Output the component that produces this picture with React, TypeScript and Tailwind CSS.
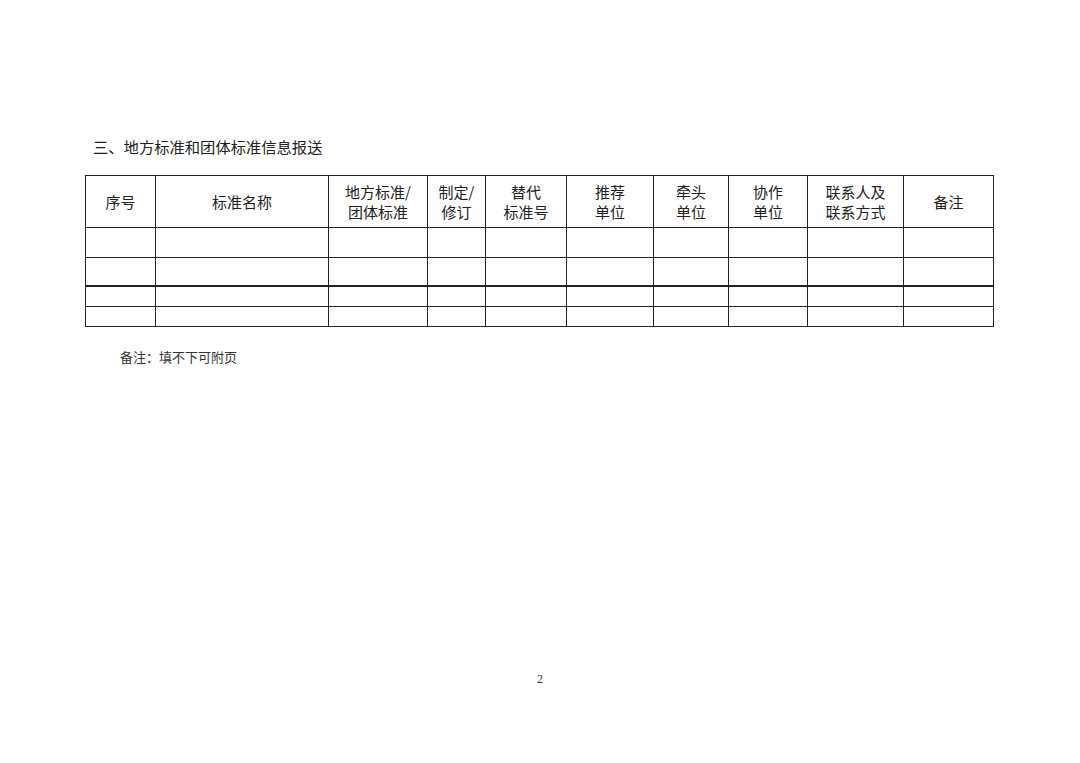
const cols = [70, 173, 99, 58, 81, 87, 75, 79, 96, 90]

const headers: string[][] = [
  ["序号"],
  ["标准名称"],
  ["地方标准/", "团体标准"],
  ["制定/", "修订"],
  ["替代", "标准号"],
  ["推荐", "单位"],
  ["牵头", "单位"],
  ["协作", "单位"],
  ["联系人及", "联系方式"],
  ["备注"],
]

// body rows, the third one sits under a heavier rule
const rowHeights = ["h-[30px]", "h-[28px]", "h-[21px]", "h-[20px]"]

export default function App() {
  return (
    <div className="w-[1080px] h-[763px] bg-white flex flex-col text-[#222]">
      <div className="pt-[136px] pl-[93px] text-[15.3px] leading-[20px] font-['Noto_Sans_CJK_SC',sans-serif]">
        三、地方标准和团体标准信息报送
      </div>

      <div className="pt-[19px] pl-[85px]">
        <table className="table-fixed border-collapse w-[908px] font-['Noto_Sans_CJK_SC',sans-serif]">
          <colgroup>
            {cols.map((w, i) => (
              <col key={i} style={{ width: w }} />
            ))}
          </colgroup>
          <thead>
            <tr className="h-[52px]">
              {headers.map((lines, i) => (
                <th
                  key={i}
                  className="border-[1.5px] border-[#222] p-0 text-center align-middle text-[15px] leading-[20px] font-normal"
                >
                  {lines.map((l, j) => (
                    <div key={j}>{l}</div>
                  ))}
                </th>
              ))}
            </tr>
          </thead>
          <tbody>
            {rowHeights.map((h, r) => (
              <tr key={r} className={h}>
                {cols.map((_, i) => (
                  <td
                    key={i}
                    className={`border-[1.5px] border-[#222] p-0 ${r === 2 ? "border-t-2" : ""}`}
                  />
                ))}
              </tr>
            ))}
          </tbody>
        </table>
      </div>

      <div className="pt-[22px] pl-[120px] text-[13px] leading-[18px] text-[#333] font-['Liberation_Serif','Noto_Sans_CJK_SC',serif]">
        备注：填不下可附页
      </div>

      <div className="pt-[305px] text-center text-[12px] leading-[14px] text-[#333] font-['Liberation_Serif',serif]">
        2
      </div>
    </div>
  )
}
